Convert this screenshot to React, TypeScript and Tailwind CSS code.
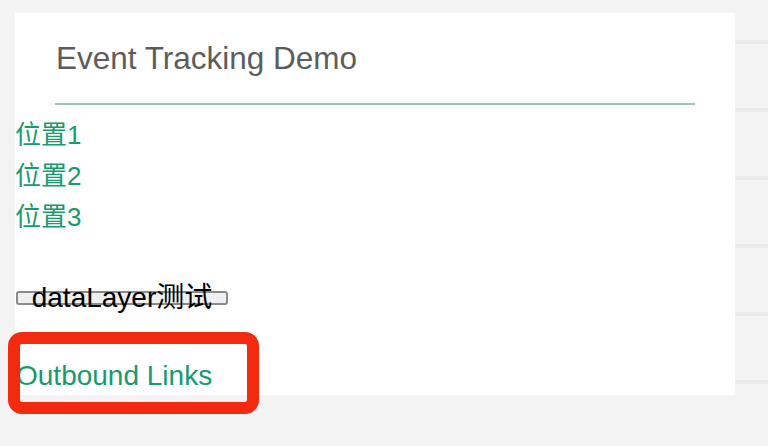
const links = ['位置1', '位置2', '位置3'];

export default function App() {
  return (
    <div
      className="relative flex h-[446px] w-full overflow-hidden bg-[#f3f3f3] pl-[15px]"
      style={{ fontFamily: '"Liberation Sans", "Noto Sans CJK SC", sans-serif' }}
    >
      <div className="pt-[13px]">
        <div className="flex h-[382px] w-[720px] flex-col bg-white">
          <div className="px-10 pt-[30px]">
            <h1 className="pl-px text-[31.5px] leading-[31px] font-normal text-[#5c5c5c]">Event Tracking Demo</h1>
            <div className="mt-[29px] h-[2px] bg-[#9cc3ba]" />
          </div>

          <div className="mt-[10px] flex flex-col">
            {links.map((label) => (
              <a key={label} href="#" className="text-[26px] leading-[41px] text-[#179a6e]">
                {label}
              </a>
            ))}
          </div>

          <div className="mt-[53px]">
            <button className="ml-px flex h-[14px] w-[212px] items-center justify-center rounded-[3px] border-2 border-[#8a8a8a] bg-[#efefef] text-[28px] leading-none text-black">
              dataLayer测试
            </button>
          </div>

          <div className="mt-[51px]">
            <a href="#" className="ml-px text-[28px] leading-[40px] text-[#179a6e]">
              Outbound Links
            </a>
          </div>
        </div>
      </div>

      {/* list rows peeking out behind the card */}
      <div className="flex-1 bg-[repeating-linear-gradient(to_bottom,#f3f3f3_0px,#f3f3f3_40px,#eaeaea_40px,#eaeaea_44px,#f3f3f3_44px,#f3f3f3_68px)]" />

      {/* red highlight drawn over the outbound link */}
      <div className="absolute left-[8px] top-[332px] h-[82px] w-[251px] rounded-[14px] border-[12px] border-[#f42a10]" />
    </div>
  );
}
